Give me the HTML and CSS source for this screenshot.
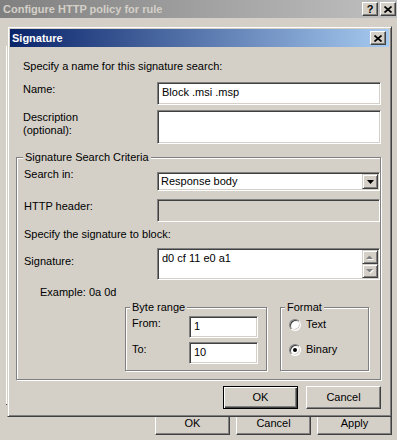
FILE: index.html
```html
<!DOCTYPE html>
<html lang="en">
<head>
    <meta charset="UTF-8">
    <title>Signature</title>
    <link rel="stylesheet" href="styles.css">
</head>
<body>
<div class="win">
    <div class="win-title">
        <span class="win-caption">Configure HTTP policy for rule</span>
        <span class="cap-btn help">?</span>
        <span class="cap-btn"><svg width="8" height="7" viewBox="0 0 8 7"><path d="M0.5 0.5 L7.5 6.5 M7.5 0.5 L0.5 6.5" stroke="#000" stroke-width="1.7"/></svg></span>
    </div>
    <div class="win-body">
        <div class="tab-edge"></div>
        <div class="win-buttons">
            <span class="btn">OK</span>
            <span class="btn">Cancel</span>
            <span class="btn">Apply</span>
        </div>
    </div>

    <div class="dlg">
        <div class="dlg-title">
            <span class="dlg-caption">Signature</span>
            <span class="cap-btn"><svg width="8" height="7" viewBox="0 0 8 7"><path d="M0.5 0.5 L7.5 6.5 M7.5 0.5 L0.5 6.5" stroke="#000" stroke-width="1.7"/></svg></span>
        </div>
        <div class="dlg-body">
            <div class="top">
                <div class="intro">Specify a name for this signature search:</div>
                <div class="row row-name">
                    <label>Name:</label>
                    <div class="edit">Block .msi .msp</div>
                </div>
                <div class="row row-desc">
                    <label>Description<br>(optional):</label>
                    <div class="edit desc"></div>
                </div>
            </div>

            <div class="group crit">
                <span class="group-title">Signature Search Criteria</span>
                <div class="row">
                    <label>Search in:</label>
                    <div class="combo">
                        <span class="combo-text">Response body</span>
                        <span class="arrow-btn"><svg width="7" height="4" viewBox="0 0 7 4"><polygon points="0,0 7,0 3.5,4" fill="#000"/></svg></span>
                    </div>
                </div>
                <div class="row row-header">
                    <label>HTTP header:</label>
                    <div class="edit disabled"></div>
                </div>
                <div class="specify">Specify the signature to block:</div>
                <div class="row row-sig">
                    <label>Signature:</label>
                    <div class="memo">
                        <span class="memo-text">d0 cf 11 e0 a1</span>
                        <span class="scroll">
                            <span class="arrow-btn sb"><svg width="8" height="5" viewBox="0 0 8 5"><polygon points="1,5 8,5 4.5,1.5" fill="#fff"/><polygon points="0,4 7,4 3.5,0.5" fill="#808080"/></svg></span>
                            <span class="arrow-btn sb"><svg width="8" height="5" viewBox="0 0 8 5"><polygon points="1,1 8,1 4.5,4.5" fill="#fff"/><polygon points="0,0 7,0 3.5,3.5" fill="#808080"/></svg></span>
                        </span>
                    </div>
                </div>
                <div class="example">Example: 0a 0d</div>
                <div class="subs">
                    <div class="group range">
                        <span class="group-title">Byte range</span>
                        <div class="range-row">
                            <label>From:</label>
                            <div class="edit small">1</div>
                        </div>
                        <div class="range-row">
                            <label>To:</label>
                            <div class="edit small">10</div>
                        </div>
                    </div>
                    <div class="group format">
                        <span class="group-title">Format</span>
                        <div class="opt"><span class="radio"></span>Text</div>
                        <div class="opt opt-bin"><span class="radio on"></span>Binary</div>
                    </div>
                </div>
            </div>

            <div class="dlg-buttons">
                <span class="btn default">OK</span>
                <span class="btn">Cancel</span>
            </div>
        </div>
    </div>
</div>
</body>
</html>
```

FILE: styles.css
```css
* {
    margin: 0;
    padding: 0;
    box-sizing: border-box;
}

body {
    background: #d4d0c8;
    font: 11px/13px "Liberation Sans", Arial, sans-serif;
    color: #000;
}

.win {
    position: relative;
    width: 397px;
    height: 440px;
    overflow: hidden;
}

.win-title {
    height: 18px;
    display: flex;
    align-items: center;
    padding: 0 1px 0 3px;
    background: linear-gradient(to right, #808080, #c0c0c0);
}

.win-caption {
    flex: 1;
    font-weight: bold;
    color: #d4d0c8;
}

.cap-btn {
    width: 16px;
    height: 14px;
    display: flex;
    align-items: center;
    justify-content: center;
    background: #d4d0c8;
    border: 1px solid;
    border-color: #fff #404040 #404040 #fff;
    box-shadow: inset -1px -1px #808080;
}

.help {
    margin-right: 2px;
    font-weight: bold;
    line-height: 11px;
}

.win-body {
    padding: 28px 5px 0 6px;
}

.tab-edge {
    width: 1px;
    height: 359px;
    background: #fff;
    border-bottom: 1px solid #404040;
}

.win-buttons {
    display: flex;
    justify-content: flex-end;
    gap: 6px;
    margin-top: 7px;
}

.btn {
    width: 75px;
    height: 23px;
    display: flex;
    align-items: center;
    justify-content: center;
    border: 1px solid;
    border-color: #fff #404040 #404040 #fff;
    box-shadow: inset -1px -1px #808080;
}

.btn.default {
    border-color: #000;
    box-shadow: inset 1px 1px #fff, inset -1px -1px #404040, inset -2px -2px #808080;
}

/* inner dialog sits over the property window */
.dlg {
    position: absolute;
    left: 7px;
    top: 26px;
    width: 385px;
    height: 391px;
    padding: 2px;
    background: #d4d0c8;
    border: 1px solid;
    border-color: #d4d0c8 #404040 #404040 #d4d0c8;
    box-shadow: inset 1px 1px #fff, inset -1px -1px #808080;
}

.dlg-title {
    height: 18px;
    display: flex;
    align-items: center;
    padding: 0 3px 0 2px;
    background: linear-gradient(to right, #0a246a, #a6caf0);
}

.dlg-caption {
    flex: 1;
    font-weight: bold;
    color: #fff;
}

.dlg-body {
    padding: 13px 8px 0 6px;
}

.top {
    padding-left: 7px;
}

.row {
    display: flex;
}

.row label {
    width: 134px;
}

.row-name {
    margin-top: 9px;
}

.row-name label,
.row-desc label {
    padding-top: 1px;
}

.row-desc {
    margin-top: 5px;
}

.edit {
    flex: 1;
    height: 23px;
    padding: 3px 4px;
    background: #fff;
    border: 1px solid;
    border-color: #808080 #fff #fff #808080;
    box-shadow: inset 1px 1px #404040, inset -1px -1px #d4d0c8;
}

.edit.desc {
    height: 34px;
}

.edit.disabled {
    background: #d4d0c8;
}

.group {
    position: relative;
    border: 1px solid #808080;
    box-shadow: inset 1px 1px #fff, 1px 1px #fff;
}

.group-title {
    position: absolute;
    top: -7px;
    left: 6px;
    padding: 0 2px;
    background: #d4d0c8;
}

.crit {
    margin-top: 13px;
    padding: 10px 0 8px 7px;
}

.crit .row label {
    width: 133px;
}

.combo {
    flex: 1;
    height: 19px;
    margin-top: 4px;
    padding: 1px;
    display: flex;
    background: #fff;
    border: 1px solid;
    border-color: #808080 #fff #fff #808080;
    box-shadow: inset 1px 1px #404040, inset -1px -1px #d4d0c8;
}

.combo-text {
    flex: 1;
    padding: 1px 2px;
}

.arrow-btn {
    width: 16px;
    height: 15px;
    display: flex;
    align-items: center;
    justify-content: center;
    background: #d4d0c8;
    border: 1px solid;
    border-color: #d4d0c8 #404040 #404040 #d4d0c8;
    box-shadow: inset 1px 1px #fff, inset -1px -1px #808080;
}

.row-header {
    margin-top: 8px;
}

.row-header label {
    padding-top: 1px;
}

.specify {
    margin-top: 6px;
}

.row-sig {
    margin-top: 7px;
}

.row-sig label {
    padding-top: 7px;
}

.memo {
    flex: 1;
    height: 32px;
    padding: 1px;
    display: flex;
    background: #fff;
    border: 1px solid;
    border-color: #808080 #fff #fff #808080;
    box-shadow: inset 1px 1px #404040, inset -1px -1px #d4d0c8;
}

.memo-text {
    flex: 1;
    padding: 2px 3px;
}

.scroll {
    display: flex;
    flex-direction: column;
}

.arrow-btn.sb {
    height: 14px;
}

.example {
    margin-top: 6px;
    padding-left: 16px;
}

.subs {
    display: flex;
    gap: 13px;
    margin-top: 8px;
    padding-left: 101px;
}

.range {
    width: 142px;
    height: 64px;
    padding: 8px 8px 0 6px;
}

.range .group-title,
.format .group-title {
    left: 4px;
}

.range-row {
    display: flex;
}

.range-row + .range-row {
    margin-top: 4px;
}

.range-row label {
    width: 58px;
    padding-top: 1px;
}

.edit.small {
    flex: none;
    width: 69px;
    height: 22px;
}

.format {
    width: 89px;
    height: 64px;
    padding: 10px 0 0 8px;
}

.opt {
    display: flex;
    align-items: center;
    gap: 5px;
    height: 13px;
}

.opt-bin {
    margin-top: 12px;
}

.radio {
    position: relative;
    width: 12px;
    height: 12px;
    border-radius: 50%;
    background: #fff;
    border: 1px solid;
    border-color: #808080 #fff #fff #808080;
    box-shadow: inset 1px 1px #404040, inset -1px -1px #d4d0c8;
}

.radio.on::after {
    content: "";
    position: absolute;
    left: 3px;
    top: 3px;
    width: 4px;
    height: 4px;
    border-radius: 50%;
    background: #000;
}

.dlg-buttons {
    display: flex;
    justify-content: flex-end;
    gap: 8px;
    margin-top: 6px;
}
```
